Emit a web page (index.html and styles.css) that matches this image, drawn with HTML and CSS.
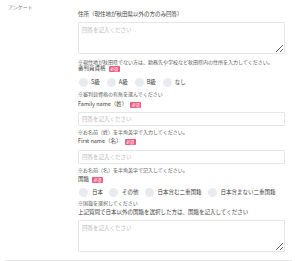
FILE: index.html
```html
<!DOCTYPE html>
<html lang="ja">
<head>
  <meta charset="UTF-8">
  <meta name="viewport" content="width=device-width, initial-scale=1.0">
  <title>アンケート</title>
  <link rel="stylesheet" href="styles.css">
</head>
<body>
  <div class="survey">
    <div class="section-title">アンケート</div>

    <div class="fields">
      <!-- 住所 -->
      <div class="label first">住所（現住地が秋田県以外の方のみ回答）</div>
      <textarea class="area" placeholder="回答を記入ください"></textarea>
      <div class="note gap5">※現住地が秋田県でない方は、勤務先や学校など秋田県内の住所を入力してください。</div>

      <!-- 審判員資格 -->
      <div class="label">審判員資格 <span class="req">必須</span></div>
      <div class="radios gap5">
        <label class="radio"><span class="dot"></span>S級</label>
        <label class="radio"><span class="dot"></span>A級</label>
        <label class="radio"><span class="dot"></span>B級</label>
        <label class="radio"><span class="dot"></span>なし</label>
      </div>
      <div class="note gap4">※審判員資格の有無を選んでください</div>

      <!-- Family name -->
      <div class="label gap4">Family name（姓） <span class="req">必須</span></div>
      <input class="text gap4" type="text" placeholder="回答を記入ください">
      <div class="note gap3">※お名前（姓）を半角英字で入力してください。</div>

      <!-- First name -->
      <div class="label gap3">First name（名） <span class="req">必須</span></div>
      <input class="text gap5" type="text" placeholder="回答を記入ください">
      <div class="note gap3">※お名前（名）を半角英字で記入してください。</div>

      <!-- 国籍 -->
      <div class="label gap3">国籍 <span class="req">必須</span></div>
      <div class="radios wide gap4">
        <label class="radio"><span class="dot"></span>日本</label>
        <label class="radio"><span class="dot"></span>その他</label>
        <label class="radio"><span class="dot"></span>日本含む二重国籍</label>
        <label class="radio"><span class="dot"></span>日本含まない二重国籍</label>
      </div>
      <div class="note gap3">※国籍を選択してください</div>

      <div class="label gap3">上記質問で日本以外の国籍を選択した方は、国籍を記入してください</div>
      <textarea class="area gap4" placeholder="回答を記入ください"></textarea>
    </div>
  </div>
  <div class="divider"></div>
</body>
</html>
```

FILE: styles.css
```css
body {
  margin: 0;
  font-family: "Noto Sans CJK JP", "Noto Sans", sans-serif;
  color: #3c3c3c;
  background: #fff;
}
.survey {
  display: flex;
  flex-direction: row;
}
.section-title {
  width: 70px;
  padding-left: 8px;
  padding-top: 4px;
  font-size: 5px;
  line-height: 6px;
  color: #777;
}
.fields {
  width: 207px;
  display: flex;
  flex-direction: column;
  align-items: flex-start;
}
.label {
  font-size: 5.5px;
  line-height: 7px;
  height: 7px;
  color: #3c3c3c;
  white-space: nowrap;
  display: flex;
  align-items: center;
}
.label.first {
  margin-top: 11px;
}
.req {
  display: inline-block;
  margin-left: 3px;
  padding: 0 1.5px;
  height: 6px;
  line-height: 6px;
  font-size: 4px;
  color: #fff;
  background: #ec5a7f;
  border-radius: 1px;
}
.note {
  font-size: 5px;
  line-height: 6px;
  height: 6px;
  color: #5a5a5a;
  white-space: nowrap;
}
.area, .text {
  box-sizing: border-box;
  width: 207px;
  margin: 4px 0 0 0;
  padding: 3px 3px;
  border: 1px solid #e3e6ea;
  border-radius: 1px;
  font-family: inherit;
  font-size: 5.5px;
  color: #444;
  background: #fff;
  outline: none;
}
.area {
  height: 32px;
  resize: vertical;
}
.text {
  height: 14px;
  padding: 0 3px;
}
.area::placeholder, .text::placeholder {
  color: #b8b8b8;
}
.radios {
  display: flex;
  align-items: center;
  height: 10px;
  gap: 7px;
  margin-left: 1px;
}
.radios.wide {
  gap: 6px;
}
.radio {
  display: flex;
  align-items: center;
  gap: 3px;
  font-size: 5.5px;
  color: #3c3c3c;
  white-space: nowrap;
}
.wide .radio {
  gap: 4px;
}
.dot {
  display: inline-block;
  width: 9px;
  height: 9px;
  border-radius: 50%;
  background: #e7ebf0;
}
.gap2 { margin-top: 2px; }
.gap3 { margin-top: 3px; }
.gap4 { margin-top: 4px; }
.gap5 { margin-top: 5px; }
.divider {
  margin: 8px 8px 0 5px;
  border-top: 1px solid #e6e6e6;
}
```
